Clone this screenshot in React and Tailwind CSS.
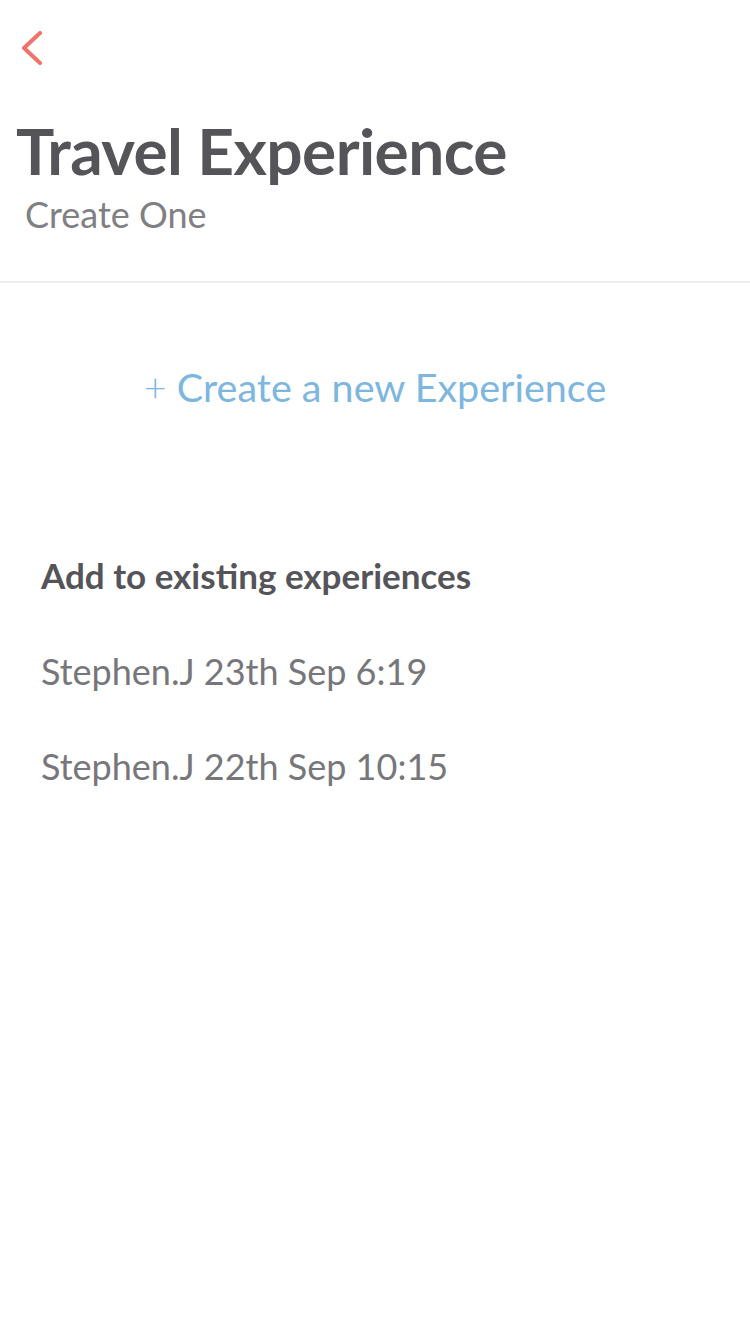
import React from "react";

const entries = ["Stephen.J 23th Sep 6:19", "Stephen.J 22th Sep 10:15"];

export default function App() {
  return (
    <div className="min-h-screen w-[750px] bg-white font-['Lato',sans-serif]">
      {/* header */}
      <div className="border-b-2 border-[#ededed] pb-[43px]">
        <div className="h-[115px] pl-[20px] pt-[31px]">
          <svg width="24" height="34" viewBox="0 0 24 34" fill="none">
            <path d="M20 2 L4 17 L20 32" stroke="#f0736a" strokeWidth="4" strokeLinecap="round" strokeLinejoin="round" />
          </svg>
        </div>
        <h1 className="pl-[16px] text-[64px] font-bold leading-[72px] tracking-[-0.6px] text-[#545459]">
          Travel Experience
        </h1>
        <p className="mt-[3px] pl-[25px] text-[36px] leading-[48px] text-[#808084]">Create One</p>
      </div>

      {/* create new */}
      <div className="flex justify-center pt-[79px]">
        <button className="text-[39.5px] leading-[50px] text-[#7db6de]">
          <span className="font-light">+</span> Create a new Experience
        </button>
      </div>

      {/* existing */}
      <div className="px-[41px] pt-[141px]">
        <h2 className="text-[35px] font-bold leading-[44px] text-[#545459]">Add to existing experiences</h2>
        <ul className="mt-[51px] flex flex-col gap-[49px]">
          {entries.map((e) => (
            <li key={e} className="text-[36px] leading-[46px] text-[#77777b]">
              {e}
            </li>
          ))}
        </ul>
      </div>
    </div>
  );
}
